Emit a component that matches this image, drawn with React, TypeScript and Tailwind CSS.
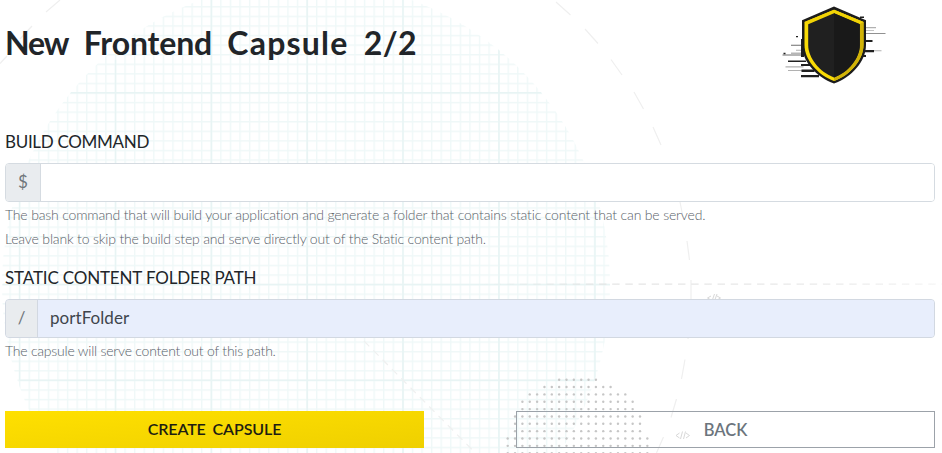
const circleDashes = [
  [60, 0, 46, 12], [32, 26, 20, 39], [7, 56, 0, 63.5],
  [556, 2, 570.5, 15], [585, 29, 598, 43.5], [611, 59.5, 622, 75], [634, 92, 643.5, 109],
  [653, 127, 661, 145], [680, 202, 683, 217], [687, 241, 689.5, 260], [691, 280, 691, 299],
  [689.5, 320, 688, 339], [685, 359.5, 681.5, 379], [676.5, 399, 671, 417.5], [663.5, 437, 656.5, 453],
];

function Backdrop() {
  const dots = [];
  for (let r = 0; r < 11; r++) {
    for (let c = 0; c < 20; c++) {
      const x = 507.7 + c * 7.35;
      const y = 379.7 + r * 7.35;
      if (Math.hypot(x - 577.5, y - 447) < 71.5) dots.push(<circle key={`${r}-${c}`} cx={x} cy={y} r={1.2} />);
    }
  }
  return (
    <svg className="absolute inset-0 -z-10" width="942" height="453" viewBox="0 0 942 453" fill="none">
      <defs>
        <pattern id="minor" x="19" y="92.3" width="9.58" height="9.58" patternUnits="userSpaceOnUse">
          <path d="M0 .7H9.58M.7 0V9.58" stroke="#eff8f8" strokeWidth="1.4" />
        </pattern>
        <clipPath id="disc"><circle cx="306" cy="285" r="304" /></clipPath>
        <linearGradient id="fade" gradientUnits="userSpaceOnUse" x1="480" y1="0" x2="942" y2="0">
          <stop offset="0" stopColor="#dedede" stopOpacity="0" />
          <stop offset=".3" stopColor="#e4e4e4" />
          <stop offset=".65" stopColor="#e8e8e8" />
          <stop offset="1" stopColor="#dedede" stopOpacity=".3" />
        </linearGradient>
      </defs>
      <g clipPath="url(#disc)">
        <rect width="942" height="453" fill="url(#minor)" />
        <path d="M19.5 189V380.5M115.5 60V453M211.4 0V453M307.2 0V453M403 0V453M499 49V453M595 200V380M70 92.8H542M16 188.7H596M3 284.5H610M20 380.3H596" stroke="#e8f4f4" strokeWidth="1.5" />
      </g>
      <g stroke="#efefef" strokeWidth="1.2">
        {circleDashes.map(([a, b, c, d]) => <line key={`${a}-${b}`} x1={a} y1={b} x2={c} y2={d} />)}
      </g>
      <path d="M480.5 284.1H942.1" stroke="url(#fade)" strokeWidth="1.4" strokeDasharray="7.4 5.77" />
      <path d="M364 341L474 451.5" stroke="#eff0f0" strokeWidth="1.2" strokeDasharray="7.5 5.7" />
      <g fill="#c6c6c6">{dots}</g>
      <g stroke="#d8d8d8" strokeWidth="1">
        <path d="M711 296l-3.5 2 3.5 2M717 296l3.5 2-3.5 2M714.5 294l-2.5 7M717 294l-2.5 7" />
        <path d="M679.5 433l-3.500 2.500 3.500 2.500M686 433l3.500 2.500-3.500 2.500M682.500 431.500l-2 7.500M685.500 431.500l-2 7.500" />
      </g>
    </svg>
  );
}

function Shield() {
  return (
    <svg className="mt-[3px] ml-auto mr-[45px] shrink-0" width="110" height="84" viewBox="780 3 110 84" fill="none">
      <g fill="#202020">
        <path d="M801 64h12v2h-12zM788 60.500h18v1.500h-18zM801.500 69.500h13v2.500h-13zM801 75h18v2.200h-18zM860 16.500h4v1.500h-4zM864 40h8.500v2h-8.500zM864 50h10v2.300h-10zM860 55h6v2h-6zM796 36h2v1.200h-2zM783.500 52.800h2v1.400h-2zM801 39h3v18h-3z" />
        <path d="M866 33h19.500v.8h-19.500zM791 44.800h12v.9h-12zM782.500 54.500h21v1h-21zM791 52.700h12v.8h-12z" opacity=".65" />
        <path d="M866 27h10v1.300h-10zM866 30h8v.8h-8zM866 50.300h15.500v.9h-15.500zM796 49.800h7v1h-7zM785.500 66.200h18v1.200h-18zM788 70h14v1h-14z" opacity=".35" />
      </g>
      <path d="M834 6.500L866 20.300V45C866 61 852 77 834 83.500C816 77 802 61 802 45V20.300Z" fill="#1c1c1c" />
      <path d="M834 9.800L863.500 22V45C863.500 59.500 850.500 75 834 81C817.500 75 804.500 59.500 804.500 45V22Z" fill="#f9db06" />
      <path d="M834 9.800L863.500 22V45C863.500 59.500 850.500 75 834 81Z" fill="#d1b308" />
      <path d="M834 9.800L863.500 22L860 24L834 13.200L808 24L804.500 22Z" fill="#f1d306" />
      <path d="M834 13.200L859.800 24.300V45C859.800 58 848.500 72 834 77.500C819.500 72 808.200 58 808.200 45V24.300Z" fill="#202020" />
      <path d="M834 13.200L859.800 24.300V45C859.800 58 848.500 72 834 77.500Z" fill="#191919" />
    </svg>
  );
}

export default function App() {
  return (
    <main className="relative isolate h-[453px] w-[942px] overflow-hidden bg-white pr-[7px] pl-[5px] font-['Lato',sans-serif] text-[#212529]">
      <Backdrop />
      <header className="flex h-[130px] items-start">
        <h1 className="mt-[23px] text-[32px] leading-10 font-bold whitespace-nowrap [word-spacing:7.5px]">
          <span className="tracking-[-1.1px]">New</span> <span className="tracking-[-0.15px]">Frontend</span> <span className="tracking-[1.2px]">Capsule</span> <span className="tracking-[0.4px]">2/2</span>
        </h1>
        <Shield />
      </header>
      <section>
        <label htmlFor="build" className="block h-[33px] text-[17px] leading-[23px] tracking-[-0.3px] whitespace-nowrap">BUILD COMMAND</label>
        <div className="flex h-[39px] overflow-hidden rounded border border-[#d5dbe1] bg-white">
          <span className="flex w-[35px] items-center justify-center border-r border-[#d5dbe1] bg-[#e9ecef] pb-[2px] text-[17px] text-[#70767b]">$</span>
          <input id="build" className="min-w-0 flex-1 bg-white px-3 outline-none" />
        </div>
        <div className="mt-px text-[14px] leading-[23.5px] font-light tracking-[-0.165px] text-[#596169]">
          <p className="whitespace-nowrap">The bash command that will build your application and generate a folder that contains static content that can be served.</p>
          <p className="whitespace-nowrap">Leave blank to skip the build step and serve directly out of the Static content path.</p>
        </div>
      </section>
      <section className="mt-4">
        <label htmlFor="folder" className="block h-[33px] text-[17px] leading-[23px] tracking-[-0.16px] whitespace-nowrap">STATIC CONTENT FOLDER PATH</label>
        <div className="flex h-[39px] overflow-hidden rounded border border-[#d2d8e1] bg-[#e8eefc]">
          <span className="flex w-[32px] items-center justify-center border-r border-[#d2d8e1] bg-[#e9ecef] pb-[2px] text-[17px] text-[#70767b]">/</span>
          <input id="folder" defaultValue="portFolder" className="min-w-0 flex-1 bg-[#e8eefc] px-3 pb-[2px] text-[17px] tracking-[0.05px] text-[#40454c] outline-none" />
        </div>
        <p className="mt-px text-[14px] leading-[23.5px] font-light tracking-[-0.22px] text-[#596169]">The capsule will serve content out of this path.</p>
      </section>
      <div className="mt-[48px] flex justify-between">
        <button className="h-[37px] w-[419px] bg-gradient-to-br from-[#ffe000] to-[#efd000] text-[16px] font-semibold tracking-[-0.1px] text-[#1d1d12] [word-spacing:3px]">CREATE CAPSULE</button>
        <button className="h-[37px] w-[419px] border border-[#9ca2a9] pt-[2px] text-[16.500px] font-semibold text-[#6c757d]">BACK</button>
      </div>
    </main>
  );
}
